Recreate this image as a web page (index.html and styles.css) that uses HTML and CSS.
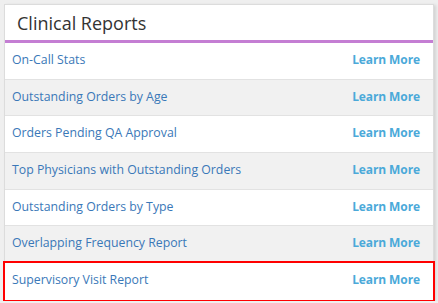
FILE: index.html
```html
<!DOCTYPE html>
<html lang="en">
<head>
  <meta charset="UTF-8">
  <meta name="viewport" content="width=device-width, initial-scale=1.0">
  <title>Clinical Reports</title>
  <link rel="stylesheet" href="styles.css">
</head>
<body>
  <div class="panel">
    <h2 class="panel-title">Clinical Reports</h2>
    <!-- Report list -->
    <ul class="report-list">
      <li class="report"><a href="#" class="report-name">On-Call Stats</a><a href="#" class="learn">Learn More</a></li>
      <li class="report"><a href="#" class="report-name">Outstanding Orders by Age</a><a href="#" class="learn">Learn More</a></li>
      <li class="report"><a href="#" class="report-name">Orders Pending QA Approval</a><a href="#" class="learn">Learn More</a></li>
      <li class="report"><a href="#" class="report-name">Top Physicians with Outstanding Orders</a><a href="#" class="learn">Learn More</a></li>
      <li class="report"><a href="#" class="report-name">Outstanding Orders by Type</a><a href="#" class="learn">Learn More</a></li>
      <li class="report"><a href="#" class="report-name">Overlapping Frequency Report</a><a href="#" class="learn">Learn More</a></li>
      <li class="report selected"><a href="#" class="report-name">Supervisory Visit Report</a><a href="#" class="learn">Learn More</a></li>
    </ul>
  </div>
</body>
</html>
```

FILE: styles.css
```css
body {
  font-family: 'Open Sans', 'Noto Sans', sans-serif;
  background: #efefef;
  margin: 0;
  padding: 4px 4px 0 4px;
}
.panel {
  width: 430px;
  background: #fff;
  border: 1px solid #dcdcdc;
  box-shadow: 2px 1px 3px rgba(0,0,0,0.12);
  box-sizing: border-box;
}
.panel-title {
  margin: 0;
  height: 38px;
  padding: 0 12px;
  display: flex;
  align-items: center;
  font-size: 18px;
  font-weight: normal;
  color: #333;
  border-bottom: 3px solid #c47ed3;
  box-sizing: border-box;
}
/* Lista de reportes */
.report-list {
  list-style: none;
  margin: 0;
  padding: 0;
}
.report {
  display: flex;
  align-items: center;
  justify-content: space-between;
  height: 36.7px;
  padding: 0 13px 3px 7px;
  border-bottom: 1px solid #e2e2e2;
  box-sizing: border-box;
  font-size: 12.3px;
}
.report:nth-child(even) {
  background: #f1f1f1;
}
.report:last-child {
  border-bottom: none;
}
.report-name {
  color: #3a78b8;
  text-decoration: none;
}
.learn {
  color: #4ba9d9;
  font-weight: bold;
  font-size: 12px;
  letter-spacing: -0.1px;
  text-decoration: none;
}
.selected {
  outline: 2px solid #f00;
  outline-offset: -0.5px;
}
```
